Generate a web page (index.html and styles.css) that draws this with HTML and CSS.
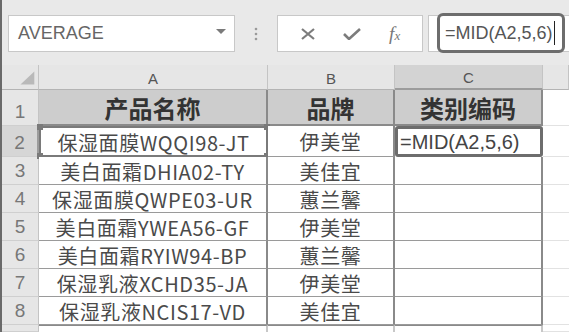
FILE: index.html
```html
<!DOCTYPE html>
<html>
<head>
    <title>Excel MID</title>
    <link rel="stylesheet" href="styles.css">
</head>
<body>
<div class="app">
    <div class="toolbar">
        <div class="namebox">
            <span>AVERAGE</span>
            <svg class="drop" width="10" height="6" viewBox="0 0 10 6"><polygon points="0,0 10,0 5,5" fill="#7a7a7a"/></svg>
        </div>
        <div class="grip">
            <svg width="4" height="14" viewBox="0 0 4 14"><circle cx="2" cy="2" r="1.3" fill="#9a9a9a"/><circle cx="2" cy="7" r="1.3" fill="#9a9a9a"/><circle cx="2" cy="12" r="1.3" fill="#9a9a9a"/></svg>
        </div>
        <div class="fbuttons">
            <svg width="16" height="12" viewBox="0 0 16 12"><path d="M2 1 L14 11 M14 1 L2 11" stroke="#7c7c7c" stroke-width="2.2" fill="none"/></svg>
            <svg width="18" height="12" viewBox="0 0 18 12"><path d="M1 6 L6 11 L17 1" stroke="#7c7c7c" stroke-width="2.6" fill="none"/></svg>
            <span class="fx">f<small>x</small></span>
        </div>
        <div class="finput">
            <div class="fedit">=MID(A2,5,6)<span class="caret"></span></div>
        </div>
    </div>
    <div class="sheet">
        <div class="hd corner"><svg width="39" height="25" viewBox="0 0 39 25"><polygon points="35,6 35,20 20,20" fill="#b9b9b9"/></svg></div>
        <div class="hd">A</div>
        <div class="hd">B</div>
        <div class="hd sel">C</div>
        <div class="hd">&nbsp;</div>

        <div class="rh">1</div>
        <div class="c t">产品名称</div>
        <div class="c t">品牌</div>
        <div class="c t">类别编码</div>
        <div class="d"></div>

        <div class="rh sel">2</div>
        <div class="c ref">保湿面膜WQQI98-JT<i class="h tl"></i><i class="h tr"></i><i class="h bl"></i><i class="h br"></i></div>
        <div class="c">伊美堂</div>
        <div class="c edit">=MID(A2,5,6)</div>
        <div class="d"></div>

        <div class="rh">3</div>
        <div class="c">美白面霜DHIA02-TY</div>
        <div class="c">美佳宜</div>
        <div class="c"></div>
        <div class="d"></div>

        <div class="rh">4</div>
        <div class="c">保湿面膜QWPE03-UR</div>
        <div class="c">蕙兰馨</div>
        <div class="c"></div>
        <div class="d"></div>

        <div class="rh">5</div>
        <div class="c">美白面霜YWEA56-GF</div>
        <div class="c">伊美堂</div>
        <div class="c"></div>
        <div class="d"></div>

        <div class="rh">6</div>
        <div class="c">美白面霜RYIW94-BP</div>
        <div class="c">蕙兰馨</div>
        <div class="c"></div>
        <div class="d"></div>

        <div class="rh">7</div>
        <div class="c">保湿乳液XCHD35-JA</div>
        <div class="c">伊美堂</div>
        <div class="c"></div>
        <div class="d"></div>

        <div class="rh">8</div>
        <div class="c">保湿乳液NCIS17-VD</div>
        <div class="c">美佳宜</div>
        <div class="c"></div>
        <div class="d"></div>

        <div class="rh"></div>
        <div class="e"></div>
        <div class="e"></div>
        <div class="e"></div>
        <div class="d"></div>
    </div>
</div>
</body>
</html>
```

FILE: styles.css
```css
* {
    box-sizing: border-box;
}
body {
    margin: 0;
    font-family: "Liberation Sans", Arial, sans-serif;
    background-color: #ffffff;
    overflow: hidden;
}
.app {
    width: 569px;
    height: 332px;
    border-left: 2px solid #6a6a6a;
    overflow: hidden;
}
.toolbar {
    height: 65px;
    background-color: #e9e9e9;
    display: flex;
    align-items: flex-start;
    padding: 15px 0 0 6px;
}
.namebox {
    width: 227px;
    height: 37px;
    background-color: #ffffff;
    border: 1px solid #c8c8c8;
    display: flex;
    align-items: center;
    justify-content: space-between;
    padding: 0 8px 0 9px;
    color: #666666;
    font-size: 18px;
}
.drop {
    margin-top: -3px;
}
.grip {
    width: 42px;
    height: 37px;
    display: flex;
    align-items: center;
    justify-content: center;
}
.fbuttons {
    width: 146px;
    height: 37px;
    background-color: #ffffff;
    border: 1px solid #c8c8c8;
    display: flex;
    align-items: center;
    justify-content: space-around;
    padding: 0 8px;
}
.fx {
    font-family: "Liberation Serif", serif;
    font-style: italic;
    font-size: 19px;
    color: #777777;
}
.fx small {
    font-size: 13px;
}
.finput {
    flex: 1;
    height: 37px;
    margin-left: 5px;
    background-color: #ffffff;
    border: 1px solid #c8c8c8;
    border-right: none;
    padding-left: 8px;
}
.fedit {
    width: 128px;
    height: 40px;
    margin-top: -3px;
    border: 3px solid #6d6d6d;
    border-radius: 6px;
    background-color: #ffffff;
    font-size: 18px;
    color: #555555;
    display: flex;
    align-items: center;
    padding-left: 5px;
}
.caret {
    width: 1px;
    height: 24px;
    margin-left: 1px;
    background-color: #222222;
}
.sheet {
    display: grid;
    grid-template-columns: 37px 229px 127px 148px 1fr;
    grid-template-rows: 25px 36px 31px repeat(6, 28px) 1fr;
    height: 267px;
}
.hd {
    background-color: #e6e6e6;
    border-right: 1px solid #c4c4c4;
    border-bottom: 1px solid #b4b4b4;
    display: flex;
    align-items: center;
    justify-content: center;
    font-size: 15px;
    color: #555555;
    padding-top: 2px;
}
.hd.corner {
    padding: 0;
}
.hd.sel {
    background-color: #d3d3d3;
    border-bottom: 2px solid #9c9c9c;
}
.rh {
    background-color: #e6e6e6;
    border-right: 1px solid #c4c4c4;
    border-bottom: 1px solid #cfcfcf;
    display: flex;
    align-items: flex-end;
    justify-content: center;
    font-size: 19px;
    color: #777777;
    padding-bottom: 2px;
}
.rh.sel {
    background-color: #d6d6d6;
    border-right: 2px solid #9c9c9c;
}
.c {
    position: relative;
    background-color: #ffffff;
    border-right: 2px solid #8a8a8a;
    border-bottom: 1px solid #9a9a9a;
    display: flex;
    align-items: center;
    justify-content: center;
    font-family: "Noto Sans CJK SC", sans-serif;
    font-size: 20px;
    letter-spacing: 0.6px;
    color: #4a4a4a;
    padding-top: 1px;
}
.c.t {
    background-color: #cdcdcd;
    font-weight: bold;
    font-size: 24px;
    color: #333333;
    letter-spacing: 0;
    border-bottom: 2px solid #8a8a8a;
}
.c.ref {
    border: 2px solid #7a7a7a;
}
.h {
    position: absolute;
    width: 6px;
    height: 6px;
    background-color: #7a7a7a;
}
.h.tl { left: -4px; top: -4px; }
.h.tr { right: -4px; top: -4px; }
.h.bl { left: -4px; bottom: -4px; }
.h.br { right: -4px; bottom: -4px; }
.c.edit {
    border: 3px solid #6d6d6d;
    border-radius: 3px;
    justify-content: flex-start;
    padding-left: 2px;
    font-family: "Liberation Sans", Arial, sans-serif;
    font-size: 20px;
    letter-spacing: 0;
    color: #444444;
}
.d {
    background-color: #ffffff;
    border-bottom: 1px solid #e2e2e2;
}
.e {
    background-color: #ffffff;
    border-right: 2px solid #c8c8c8;
    border-top: 1px solid #8a8a8a;
}
```
